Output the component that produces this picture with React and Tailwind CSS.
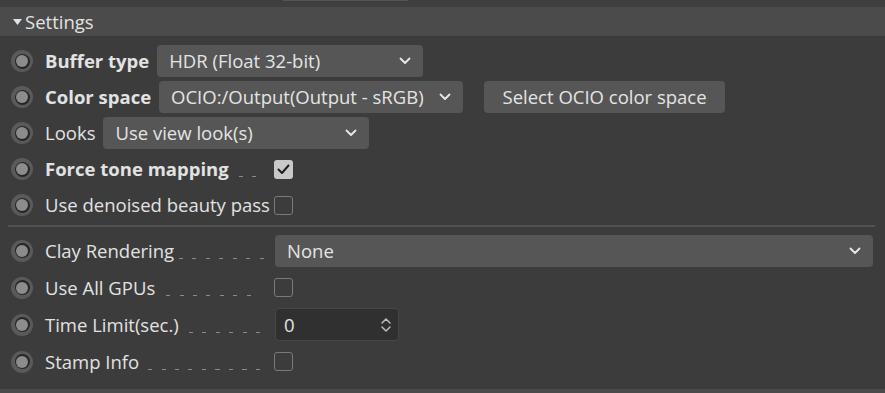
import React from "react";

const font = { fontFamily: '"Open Sans", "Noto Sans", sans-serif' };

function Radio() {
  return (
    <div className="w-[22px] h-[22px] rounded-full bg-[#5a5a5a] flex items-center justify-center shrink-0">
      <div className="w-[15px] h-[15px] rounded-full bg-[#262626] flex items-center justify-center">
        <div className="w-[12px] h-[12px] rounded-full bg-[#8c8c8c]" />
      </div>
    </div>
  );
}

function Chevron({ className = "" }) {
  return (
    <svg width="12" height="8" viewBox="0 0 12 8" className={className}>
      <path d="M1.5 1.5 L6 6 L10.5 1.5" fill="none" stroke="#e8e8e8" strokeWidth="1.8" strokeLinecap="round" strokeLinejoin="round" />
    </svg>
  );
}

function Select({ text, className = "" }) {
  return (
    <div className={`h-[32px] bg-[#565656] rounded-[4px] flex items-center justify-between pl-[12px] pr-[12px] shrink-0 ${className}`}>
      <span className="text-[18.5px] text-[#e4e4e4] whitespace-nowrap">{text}</span>
      <Chevron />
    </div>
  );
}

function Checkbox({ checked }) {
  return checked ? (
    <div className="w-[19px] h-[19px] rounded-[3px] bg-[#c9c9c9] flex items-center justify-center shrink-0">
      <svg width="13" height="11" viewBox="0 0 13 11">
        <path d="M1.5 5.5 L5 9 L11.5 1.5" fill="none" stroke="#1e1e1e" strokeWidth="2" strokeLinecap="round" strokeLinejoin="round" />
      </svg>
    </div>
  ) : (
    <div className="w-[19px] h-[19px] rounded-[3px] border-[1.5px] border-[#7a7a7a] shrink-0" />
  );
}

function Leader({ className = "" }) {
  return (
    <div className={`flex-1 self-end mb-[10px] h-[1.5px] bg-[image:repeating-linear-gradient(to_right,#8a8a8a_0_4px,transparent_4px_13.5px)] ${className}`} />
  );
}

function Row({ children, h = "h-[36px]" }) {
  return <div className={`flex items-center ${h} pl-[11px]`}>{children}</div>;
}

function Label({ children, bold }) {
  return (
    <span className={`text-[18.5px] text-[#e2e2e2] whitespace-nowrap ${bold ? "font-bold" : ""}`}>{children}</span>
  );
}

export default function App() {
  return (
    <div className="w-[885px] h-[393px] bg-[#3c3c3c] flex flex-col overflow-hidden" style={font}>
      <div className="h-[7px] bg-[#3f3f3f] relative shrink-0">
        <div className="absolute left-[283px] top-0 w-[125px] h-[1px] bg-[#555]" />
      </div>
      <div className="h-[30px] bg-[#4b4b4b] flex items-center pl-[13px] shrink-0 border-b border-[#383838]">
        <svg width="9" height="6" viewBox="0 0 9 6" className="mr-[3px]">
          <path d="M0 0 L9 0 L4.5 6 Z" fill="#e2e2e2" />
        </svg>
        <span className="text-[18.5px] text-[#e2e2e2]">Settings</span>
      </div>
      <div className="flex flex-col pt-[6px] flex-1">
        <Row>
          <Radio />
          <div className="ml-[12px]"><Label bold>Buffer type</Label></div>
          <Select text="HDR (Float 32-bit)" className="ml-[8px] w-[266px]" />
        </Row>
        <Row>
          <Radio />
          <div className="ml-[12px]"><Label bold>Color space</Label></div>
          <Select text="OCIO:/Output(Output - sRGB)" className="ml-[8px] w-[304px]" />
          <div className="ml-[21px] w-[241px] h-[32px] bg-[#565656] rounded-[4px] flex items-center justify-center shrink-0">
            <span className="text-[18.5px] text-[#e4e4e4] whitespace-nowrap">Select OCIO color space</span>
          </div>
        </Row>
        <Row>
          <Radio />
          <div className="ml-[12px]"><Label>Looks</Label></div>
          <Select text="Use view look(s)" className="ml-[8px] w-[266px]" />
        </Row>
        <Row>
          <Radio />
          <div className="ml-[12px] w-[229px] flex items-center h-full shrink-0">
            <Label bold>Force tone mapping</Label>
            <Leader className="ml-[10px] mr-[14px]" />
          </div>
          <Checkbox checked />
        </Row>
        <Row>
          <Radio />
          <div className="ml-[12px] w-[229px] flex items-center h-full shrink-0">
            <Label>Use denoised beauty pass</Label>
          </div>
          <Checkbox />
        </Row>
        <div className="mx-[8px] mt-[2px] mb-[5px] h-[2px] bg-[#515151] w-[867px]" />
        <Row h="h-[37px]">
          <Radio />
          <div className="ml-[12px] w-[230px] flex items-center h-full shrink-0">
            <Label>Clay Rendering</Label>
            <Leader className="ml-[5px] mr-[11px]" />
          </div>
          <Select text="None" className="w-[598px]" />
        </Row>
        <Row h="h-[37px]">
          <Radio />
          <div className="ml-[12px] w-[229px] flex items-center h-full shrink-0">
            <Label>Use All GPUs</Label>
            <Leader className="ml-[11px] mr-[21px]" />
          </div>
          <Checkbox />
        </Row>
        <Row h="h-[37px]">
          <Radio />
          <div className="ml-[12px] w-[230px] flex items-center h-full shrink-0">
            <Label>Time Limit(sec.)</Label>
            <Leader className="ml-[10px] mr-[12px]" />
          </div>
          <div className="w-[124px] h-[33px] bg-[#303030] border border-[#474747] rounded-[4px] flex items-center justify-between pl-[8px] pr-[6px] shrink-0">
            <span className="text-[18.5px] text-[#e4e4e4]">0</span>
            <svg width="12" height="18" viewBox="0 0 12 18">
              <path d="M2 7 L6 3 L10 7" fill="none" stroke="#bdbdbd" strokeWidth="1.5" strokeLinecap="round" strokeLinejoin="round" />
              <path d="M2 11 L6 15 L10 11" fill="none" stroke="#bdbdbd" strokeWidth="1.5" strokeLinecap="round" strokeLinejoin="round" />
            </svg>
          </div>
        </Row>
        <Row h="h-[37px]">
          <Radio />
          <div className="ml-[12px] w-[229px] flex items-center h-full shrink-0">
            <Label>Stamp Info</Label>
            <Leader className="ml-[9px] mr-[12px]" />
          </div>
          <Checkbox />
        </Row>
      </div>
      <div className="h-[4px] bg-[#4a4a4a] shrink-0" />
    </div>
  );
}
